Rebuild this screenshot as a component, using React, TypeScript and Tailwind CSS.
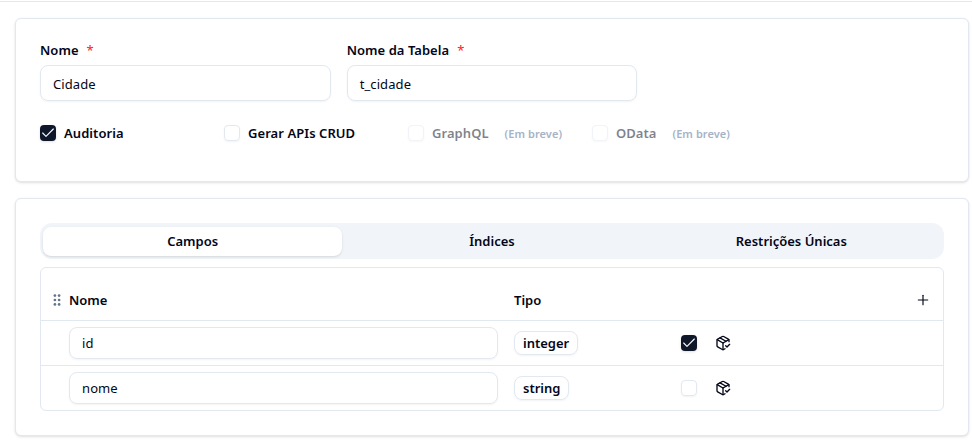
import type { ReactNode } from "react";
import { Check, PackageCheck, Plus } from "lucide-react";

function DragDots() {
  return (
    <svg viewBox="0 0 8 12" className="h-3 w-2 text-slate-500" fill="currentColor">
      {[1.6, 6, 10.4].map((y) => (
        <g key={y}>
          <circle cx="1.9" cy={y} r="1.35" />
          <circle cx="6.1" cy={y} r="1.35" />
        </g>
      ))}
    </svg>
  );
}

function Checkbox({ checked, disabled }: { checked?: boolean; disabled?: boolean }) {
  if (checked) {
    return (
      <span className="flex size-4 shrink-0 items-center justify-center rounded bg-slate-900 text-slate-50 shadow-sm">
        <Check className="size-4" strokeWidth={1.75} />
      </span>
    );
  }
  return (
    <span
      className={`size-4 shrink-0 rounded border border-slate-200 shadow-xs ${disabled ? "opacity-50" : ""}`}
    />
  );
}

function Field({ label, value }: { label: string; value: string }) {
  return (
    <div className="flex flex-col">
      <div className="flex h-[22px] items-center gap-2 font-semibold">
        <span className="tracking-[0.04px]">{label}</span>
        <span className="font-normal text-[#ff2020]">*</span>
      </div>
      <div className="mt-1 flex h-9 items-center rounded-lg border border-slate-200 px-3 pt-0.5 tracking-[0.1px] shadow-xs">
        {value}
      </div>
    </div>
  );
}

function Option({
  label,
  checked,
  disabled,
}: {
  label: string;
  checked?: boolean;
  disabled?: boolean;
}) {
  return (
    <div className="flex h-4 items-center whitespace-nowrap">
      <Checkbox checked={checked} disabled={disabled} />
      <span className={`ml-2 font-semibold tracking-[0.06px] ${disabled ? "opacity-50" : ""}`}>
        {label}
      </span>
      {disabled && (
        <span className="ml-4 pt-px text-[11px] font-semibold tracking-[0.06px] text-slate-400 opacity-80">
          (Em breve)
        </span>
      )}
    </div>
  );
}

function Card({ children, className }: { children: ReactNode; className: string }) {
  return (
    <section className={`rounded-md border border-slate-200 bg-white px-6 shadow ${className}`}>
      {children}
    </section>
  );
}

function Row({ name, type, checked }: { name: string; type: string; checked?: boolean }) {
  return (
    <div className="flex h-[45px] items-center border-t border-slate-200 pl-7">
      <div className="flex h-8 w-[429px] items-center rounded-lg border border-slate-200 px-3 tracking-[0.1px] shadow-xs">
        {name}
      </div>
      <div className="ml-4 w-[167px]">
        <span className="inline-flex h-6 items-center rounded-lg border border-slate-200 px-2 font-semibold shadow-xs">
          {type}
        </span>
      </div>
      <Checkbox checked={checked} />
      <PackageCheck className="ml-[18px] size-4" />
    </div>
  );
}

export default function App() {
  return (
    <div className="h-[443px] overflow-hidden bg-white pt-px font-['Noto_Sans','Open_Sans',sans-serif] text-[13px] leading-5 text-slate-950">
      <main className="flex flex-col gap-4 border-t border-slate-200 pt-4 pr-[3px] pl-[15px]">
        <Card className="h-[164px] pt-5">
          <div className="grid grid-cols-3 gap-4">
            <Field label="Nome" value="Cidade" />
            <Field label="Nome da Tabela" value="t_cidade" />
          </div>
          <div className="mt-6 grid grid-cols-5 gap-4">
            <Option label="Auditoria" checked />
            <Option label="Gerar APIs CRUD" />
            <Option label="GraphQL" disabled />
            <Option label="OData" disabled />
          </div>
        </Card>
        <Card className="h-[238px] pt-6">
          <div className="grid h-9 grid-cols-3 rounded-xl bg-slate-100 px-[3px] pt-1 pb-[3px] text-center font-semibold">
            <div className="flex items-center justify-center rounded-lg bg-white pb-px shadow">
              Campos
            </div>
            <div className="flex items-center justify-center pb-px">Índices</div>
            <div className="flex items-center justify-center pb-px">Restrições Únicas</div>
          </div>
          <div className="mt-2 rounded-md border border-slate-200">
            <div className="flex h-[52px] items-center pt-3 pr-3 pl-3 font-semibold">
              <DragDots />
              <span className="ml-2 w-[445px]">Nome</span>
              <span>Tipo</span>
              <span className="ml-auto pb-px">
                <Plus className="size-4" strokeWidth={1.75} />
              </span>
            </div>
            <Row name="id" type="integer" checked />
            <Row name="nome" type="string" />
          </div>
        </Card>
      </main>
    </div>
  );
}
